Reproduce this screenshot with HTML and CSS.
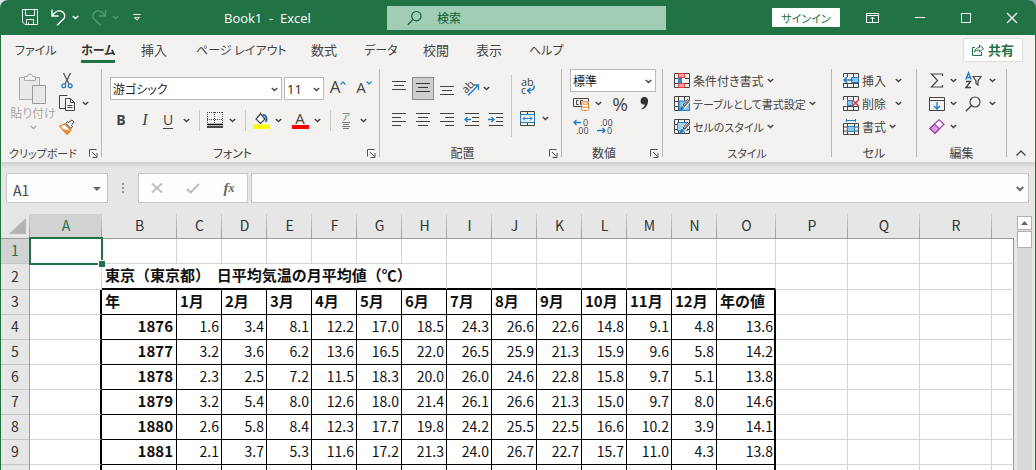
FILE: index.html
```html
<!DOCTYPE html>
<html lang="ja">
<head>
<meta charset="utf-8">
<title>Book1 - Excel</title>
<link rel="stylesheet" href="styles.css">
</head>
<body>
<svg class="defs" aria-hidden="true">
  <symbol id="chev" viewBox="0 0 7 5"><path d="M.8 1l2.700 2.600L6.200 1" fill="none" stroke="currentColor" stroke-width="1.400"/></symbol>
  <symbol id="launch" viewBox="0 0 9 9"><path d="M.5 7.500V.5H7.500M3 3l4.500 4.500M8 4v4.500H3.500" fill="none" stroke="#555"/></symbol>
  <symbol id="lens" viewBox="0 0 16 16"><circle cx="10" cy="6" r="5" fill="none" stroke="currentColor" stroke-width="1.200"/><path d="M6.300 9.700L.8 15.200" stroke="currentColor" stroke-width="1.300"/></symbol>
  <symbol id="gridbase" viewBox="0 0 16 16"><path d="M.5.5h15v14H.5zM.5 5.500h15M.5 10.500h15M4.500.5v14M10.500.5v14" fill="none" stroke="#444"/></symbol>
</svg>
<div class="app">
  <header class="titlebar">
    <div class="quick">
      <button class="ib" aria-label="保存"><svg width="17" height="17" viewBox="0 0 17 17" fill="none" stroke="#fff"><path d="M.5.5h15v15H3l-2.500-2.500zM3.500.5v6h9v-6M4.500 15.500v-5h7v5M6.500 15.500v-2"/></svg></button>
      <button class="ib undo" aria-label="元に戻す"><svg width="16" height="17" viewBox="0 0 16 17" fill="none" stroke="#fff" stroke-width="1.400"><path d="M1 .5v6.500h6.500M1.300 6.700C4 3 6.500 1.500 9.500 2c4 .7 5.500 5 3 8L6 16.300"/></svg></button>
      <button class="ib light" aria-label="元に戻すの一覧"><svg width="7" height="5"><use href="#chev"/></svg></button>
      <button class="ib redo" aria-label="やり直し"><svg width="16" height="17" viewBox="0 0 16 17" fill="none" stroke="#4f9a6e" stroke-width="1.400"><path d="M14.500.5v6.500H8M14.200 6.700C11.500 3 9 1.500 6 2c-4 .7-5.500 5-3 8l6.500 6.300"/></svg></button>
      <button class="ib dim" aria-label="やり直しの一覧"><svg width="7" height="5"><use href="#chev"/></svg></button>
      <button class="ib custom" aria-label="クイック アクセスのカスタマイズ"><svg width="8" height="7" viewBox="0 0 8 7" fill="none" stroke="#fff"><path d="M.5.5h7M1.500 3.500L4 6l2.500-2.500z"/></svg></button>
      <span class="doc">Book1 &nbsp;- &nbsp;Excel</span>
    </div>
    <label class="search"><svg width="15" height="16"><use href="#lens"/></svg><input type="search" placeholder="検索" aria-label="検索"></label>
    <div class="window">
      <button class="signin">サインイン</button>
      <button class="ib" aria-label="リボンの表示オプション"><svg width="13" height="10" viewBox="0 0 13 10" fill="none" stroke="#fff"><path d="M.5.5h12v9H.5zM.5 2.500h12M6.500 9V4M4.500 6l2-2 2 2"/></svg></button>
      <button class="ib" aria-label="最小化"><svg width="10" height="10" viewBox="0 0 10 10" stroke="#fff"><path d="M0 4.500h10"/></svg></button>
      <button class="ib" aria-label="最大化"><svg width="10" height="10" viewBox="0 0 10 10" fill="none" stroke="#fff"><path d="M.5.5h9v9h-9z"/></svg></button>
      <button class="ib" aria-label="閉じる"><svg width="10" height="10" viewBox="0 0 10 10" stroke="#fff" stroke-width="1.200"><path d="M0 0l10 10M10 0L0 10"/></svg></button>
    </div>
  </header>

  <div class="frame">
  <nav class="tabs">
    <a href="#" class="kana">ファイル</a><a href="#" class="kana on">ホーム</a><a href="#">挿入</a><a href="#" class="kana">ページ レイアウト</a><a href="#">数式</a><a href="#" class="kana">データ</a><a href="#">校閲</a><a href="#">表示</a><a href="#" class="kana">ヘルプ</a>
    <button class="share"><svg width="12" height="12" viewBox="0 0 12 12" fill="none" stroke="#217346"><path d="M3 3.500H.5v8h9V8M2.500 8C3 5 5 3.500 7.500 3.500V1l4 3.500-4 3.500V6C5.500 6 4 6.500 2.500 8z"/></svg>共有</button>
  </nav>

  <section class="ribbon">
    <div class="group g-clip">
      <div class="body clip">
        <button class="paste" disabled><svg width="28" height="31" viewBox="0 0 28 31" fill="#e8e8e8" stroke="#aaa"><path d="M.5 4.500h20v22H.5z"/><path d="M5.500 7.500v-4h3a2.500 2.500 0 0 1 5 0h3v4z" fill="#f3f2f1"/><path d="M13.500 12.500h13v18h-13z" stroke="#999"/></svg><span>貼り付け</span><svg width="7" height="5"><use href="#chev"/></svg></button>
        <div class="stack">
          <div class="line"><button class="ib" aria-label="切り取り"><svg width="16" height="17" viewBox="0 0 16 17" fill="none"><path d="M4.500 1l5.500 11M11.500 1L6 12" stroke="#555" stroke-width="1.300"/><circle cx="4.800" cy="13.700" r="1.900" stroke="#1e7fc4" stroke-width="1.300"/><circle cx="11.200" cy="13.700" r="1.900" stroke="#1e7fc4" stroke-width="1.300"/></svg></button></div>
          <div class="line"><button class="ib" aria-label="コピー"><svg width="16" height="17" viewBox="0 0 16 17" fill="none" stroke="#444"><path d="M6.500 13.500h-6V.5h8M6.500 3.500h5l4 4v8h-9zM11.500 3.500v4h4M8.500 10.500h5M8.500 12.500h5"/></svg></button><button class="ib" aria-label="コピーの一覧"><svg width="7" height="5"><use href="#chev"/></svg></button></div>
          <div class="line"><button class="ib" aria-label="書式のコピー"><svg width="16" height="16" viewBox="0 0 16 16"><path d="M.8 7l5-2 6 6-3.500 4.300C5.500 13 3 10.500.8 7z" fill="#fff" stroke="#e07b1a" stroke-width="1.300"/><path d="M3 10l3 2 2 3 2.500-3.500-4-1z" fill="#e98a30"/><path d="M7 4.500l5 5 1.500-2-1-1 2.500-3.500L13 1 9.500 3.500l-1-1z" fill="#eee" stroke="#444"/></svg></button></div>
        </div>
      </div>
      <div class="cap kana">クリップボード<button class="launch" aria-label="クリップボードの設定"><svg width="9" height="9"><use href="#launch"/></svg></button></div>
    </div>

    <div class="group g-font">
      <div class="body two">
        <div class="fontrow">
          <div class="combo"><select aria-label="フォント"><option>游ゴシック</option></select><svg width="7" height="5"><use href="#chev"/></svg></div>
          <div class="combo size"><select aria-label="フォント サイズ"><option>11</option></select><svg width="7" height="5"><use href="#chev"/></svg></div>
          <button class="ib glyph big" aria-label="フォント サイズの拡大">A<svg width="6" height="4" viewBox="0 0 6 4" fill="none" stroke="#1e7fc4" stroke-width="1.200"><path d="M.5 3.500L3 1l2.500 2.500"/></svg></button>
          <button class="ib glyph" aria-label="フォント サイズの縮小">A<svg width="6" height="4" viewBox="0 0 6 4" fill="none" stroke="#1e7fc4" stroke-width="1.200"><path d="M.5.5L3 3 5.500.5"/></svg></button>
        </div>
        <div class="styrow">
          <button class="ib letter b">B</button><button class="ib letter i">I</button><button class="ib letter u">U</button>
          <button class="ib" aria-label="下線の一覧"><svg width="7" height="5"><use href="#chev"/></svg></button><i class="sep"></i>
          <button class="ib" aria-label="罫線"><svg width="16" height="16" viewBox="0 0 16 16" stroke="#444"><path d="M0 .5h16M0 7.500h16M.5 0v11M7.500 0v11M15.500 0v11" stroke-dasharray="1 1"/><path d="M0 12.500h16M0 15h16" stroke="#111" stroke-width="1.500"/></svg></button>
          <button class="ib" aria-label="罫線の一覧"><svg width="7" height="5"><use href="#chev"/></svg></button><i class="sep"></i>
          <button class="ib" aria-label="塗りつぶしの色"><svg width="17" height="17" viewBox="0 0 17 17"><path d="M0 12.500h17V17H0z" fill="#ff0"/><path d="M7.500 2L3 7l4.500 4.500L12 7 7.500 2V.5" fill="#fff" stroke="#444" stroke-width="1.200"/><path d="M9.500 3c3-.5 5 2 3.500 7" fill="none" stroke="#1e6fb4" stroke-width="2"/></svg></button>
          <button class="ib" aria-label="塗りつぶしの色の一覧"><svg width="7" height="5"><use href="#chev"/></svg></button>
          <button class="ib fcolor" aria-label="フォントの色">A</button>
          <button class="ib" aria-label="フォントの色の一覧"><svg width="7" height="5"><use href="#chev"/></svg></button><i class="sep"></i>
          <button class="ib ruby" aria-label="ふりがな"><span>ア</span><svg width="8" height="7" viewBox="0 0 8 7" stroke="#777"><path d="M0 .5h8M1 2.500h6M0 4.500h8M1 6.500h6"/></svg></button>
          <button class="ib" aria-label="ふりがなの一覧"><svg width="7" height="5"><use href="#chev"/></svg></button>
        </div>
      </div>
      <div class="cap">フォント<button class="launch" aria-label="フォントの設定"><svg width="9" height="9"><use href="#launch"/></svg></button></div>
    </div>

    <div class="group g-align">
      <div class="body alignbody">
        <div class="aligngrid">
          <button class="ib" aria-label="上揃え"><svg width="14" height="14" viewBox="0 0 14 14" stroke="#444"><path d="M0 .5h14M2 4.500h10M0 8.500h14"/></svg></button>
          <button class="ib pressed" aria-label="上下中央揃え"><svg width="14" height="14" viewBox="0 0 14 14" stroke="#333"><path d="M0 2.500h14M2 6.500h10M0 10.500h14"/></svg></button>
          <button class="ib" aria-label="下揃え"><svg width="14" height="14" viewBox="0 0 14 14" stroke="#444"><path d="M0 5.500h14M2 9.500h10M0 13.500h14"/></svg></button>
          <button class="ib" aria-label="方向"><svg width="17" height="16" viewBox="0 0 17 16"><text x="0" y="11" font-size="11" fill="#444" transform="rotate(-45 5 9)" class="ico">ab</text><path d="M5 15.500L15.500 5M10.500 5h5v5" fill="none" stroke="#1e7fc4" stroke-width="1.300"/></svg></button>
          <button class="ib start" aria-label="方向の一覧"><svg width="7" height="5"><use href="#chev"/></svg></button>
          <button class="ib" aria-label="左揃え"><svg width="14" height="13" viewBox="0 0 14 13" stroke="#444"><path d="M0 .5h14M0 4.500h9M0 8.500h14M0 12.500h9"/></svg></button>
          <button class="ib" aria-label="中央揃え"><svg width="14" height="13" viewBox="0 0 14 13" stroke="#444"><path d="M0 .5h14M2 4.500h10M0 8.500h14M2 12.500h10"/></svg></button>
          <button class="ib" aria-label="右揃え"><svg width="14" height="13" viewBox="0 0 14 13" stroke="#444"><path d="M0 .5h14M5 4.500h9M0 8.500h14M5 12.500h9"/></svg></button>
          <button class="ib" aria-label="インデントを減らす"><svg width="15" height="13" viewBox="0 0 15 13" fill="none" stroke="#444"><path d="M1 .5h14M8 4.500h7M8 8.500h7M1 12.500h14"/><path d="M7 6.500H1M3.500 4L1 6.500 3.500 9" stroke="#1e7fc4" stroke-width="1.300"/></svg></button>
          <button class="ib" aria-label="インデントを増やす"><svg width="15" height="13" viewBox="0 0 15 13" fill="none" stroke="#444"><path d="M1 .5h14M8 4.500h7M8 8.500h7M1 12.500h14"/><path d="M0 6.500h6M3.500 4L6 6.500 3.500 9" stroke="#1e7fc4" stroke-width="1.300"/></svg></button>
        </div>
        <div class="wrapcol">
          <button class="ib" aria-label="折り返して全体を表示する"><svg width="16" height="17" viewBox="0 0 16 17"><text x="1" y="8" font-size="11" fill="#444" class="ico">ab</text><text x="1" y="16" font-size="11" fill="#444" class="ico">c</text><path d="M14 7.500c1 3-1 5.500-6 5M10.500 10L7.500 12.500l3 3" fill="none" stroke="#1e7fc4" stroke-width="1.500"/></svg></button>
          <div class="line"><button class="ib" aria-label="セルを結合して中央揃え"><svg width="15" height="15" viewBox="0 0 15 15" fill="none" stroke="#444"><path d="M.5.5h14v14H.5zM7.500.5v3M7.500 11.500v3"/><path d="M.5 3.500h14v8H.5zM3 7.500h9M5 5.500l-2 2 2 2M10 5.500l2 2-2 2" stroke="#1e7fc4" fill="none"/></svg></button><button class="ib" aria-label="結合の一覧"><svg width="7" height="5"><use href="#chev"/></svg></button></div>
        </div>
      </div>
      <div class="cap">配置<button class="launch" aria-label="配置の設定"><svg width="9" height="9"><use href="#launch"/></svg></button></div>
    </div>

    <div class="group g-num">
      <div class="body numbody">
        <div class="combo"><select aria-label="表示形式"><option>標準</option></select><svg width="7" height="5"><use href="#chev"/></svg></div>
        <div class="numrow">
          <button class="ib" aria-label="通貨表示形式"><svg width="17" height="14" viewBox="0 0 17 14" fill="none" stroke="#444"><path d="M8 9.500H.5v-8h15v3M5.500 3.500h-2v4h2M10 3.500H7.500v4"/><path d="M8.500 6v6c0 2 7 2 7 0V6z" fill="#fff" stroke="#e07b1a"/><ellipse cx="12" cy="6" rx="3.500" ry="1.300" fill="#fff" stroke="#e07b1a"/><path d="M8.500 9c0 1.700 7 1.700 7 0" stroke="#e07b1a"/></svg></button>
          <button class="ib" aria-label="通貨の一覧"><svg width="7" height="5"><use href="#chev"/></svg></button>
          <button class="ib pct">%</button>
          <button class="ib" aria-label="桁区切りスタイル"><svg width="9" height="13" viewBox="0 0 9 13"><path d="M4 0c3 0 4.500 2 4 5-.5 4-3 6.500-6 7.500L1.500 11.500c2-1 3.200-2.300 3.300-4C2 8 .5 6.200.5 4S2 0 4 0z" fill="#333"/></svg></button>
        </div>
        <div class="line dec">
          <button class="ib" aria-label="小数点以下の表示桁数を増やす"><svg width="16" height="15" viewBox="0 0 16 15"><text x="10" y="7" font-size="9" fill="#444" class="ico">0</text><text x="3" y="15" font-size="9" fill="#444" class="ico">.00</text><path d="M8 3.500H1M3.500 1L1 3.500 3.500 6" fill="none" stroke="#1e7fc4" stroke-width="1.300"/></svg></button>
          <button class="ib" aria-label="小数点以下の表示桁数を減らす"><svg width="16" height="15" viewBox="0 0 16 15"><text x="3" y="7" font-size="9" fill="#444" class="ico">.00</text><text x="10" y="15" font-size="9" fill="#444" class="ico">0</text><path d="M0 11.500h8M5.500 9L8 11.500 5.500 14" fill="none" stroke="#1e7fc4" stroke-width="1.300"/></svg></button>
        </div>
      </div>
      <div class="cap">数値<button class="launch" aria-label="数値の設定"><svg width="9" height="9"><use href="#launch"/></svg></button></div>
    </div>

    <div class="group g-style">
      <div class="body list">
        <button class="cmd"><svg width="16" height="15" viewBox="0 0 16 15"><use href="#gridbase" width="16" height="16"/><path d="M4.500.5h6v4h-6zM4.500 10.500h6v4h-6z" fill="#f7a6a6" stroke="#e03a3a"/><path d="M4 5h4v5H4z" fill="#2e86c9"/><path d="M8 5h3v5H8z" fill="#f3f2f1"/></svg>条件付き書式<svg class="c" width="7" height="5"><use href="#chev"/></svg></button>
        <button class="cmd kana"><svg width="16" height="15" viewBox="0 0 16 15"><use href="#gridbase" width="16" height="16"/><path d="M5 5h10.500v9.500H5z" fill="#8fc5ec" stroke="#1e7fc4"/><path d="M15 4.500l-6 7" stroke="#fff" stroke-width="4"/><path d="M15.500 3.500l-6 7M14 3l-5 6 1.500 1.500 5-5.500" fill="#fff" stroke="#444"/><path d="M8.500 10c-2 0-2 3-4 4 3 .7 5.500-.5 5.500-2.500z" fill="#1e7fc4"/></svg>テーブルとして書式設定<svg class="c" width="7" height="5"><use href="#chev"/></svg></button>
        <button class="cmd kana"><svg width="16" height="15" viewBox="0 0 16 15"><use href="#gridbase" width="16" height="16"/><path d="M3.500 3.500h10v8h-10z" fill="#a8d2f0" stroke="#1e7fc4"/><path d="M15 4.500l-6 7" stroke="#fff" stroke-width="4"/><path d="M15.500 3.500l-6 7M14 3l-5 6 1.500 1.500 5-5.500" fill="#fff" stroke="#444"/><path d="M8.500 10c-2 0-2 3-4 4 3 .7 5.500-.5 5.500-2.500z" fill="#1e7fc4"/></svg>セルのスタイル<svg class="c" width="7" height="5"><use href="#chev"/></svg></button>
      </div>
      <div class="cap kana">スタイル</div>
    </div>

    <div class="group g-cell">
      <div class="body list">
        <button class="cmd wide"><svg width="16" height="15" viewBox="0 0 16 15"><use href="#gridbase" width="16" height="16"/><path d="M0 4h9v6H0z" fill="#f3f2f1"/><path d="M8.500 4.500h7v5h-7z" fill="#8fc5ec" stroke="#1e7fc4"/><path d="M10 7H1M4 4L1 7l3 3" fill="none" stroke="#1e7fc4" stroke-width="1.500"/></svg>挿入<svg class="c" width="7" height="5"><use href="#chev"/></svg></button>
        <button class="cmd wide"><svg width="16" height="15" viewBox="0 0 16 15"><use href="#gridbase" width="16" height="16"/><path d="M0 4h16v6H0z" fill="#f3f2f1"/><path d="M4.500 4.500h5v5h-5z" fill="#8fc5ec" stroke="#1e7fc4"/><path d="M9.500 4l6 6M15.500 4l-6 6" stroke="#e03a3a" stroke-width="1.600"/></svg>削除<svg class="c" width="7" height="5"><use href="#chev"/></svg></button>
        <button class="cmd"><svg width="16" height="16" viewBox="0 0 16 16" fill="none"><path d="M.5 4.500h15v11H.5zM.5 8h15M.5 12h15M4.500 4v12M11.500 4v12" stroke="#444"/><path d="M4.500 7.500h7v5h-7z" fill="#8fc5ec" stroke="#1e7fc4"/><path d="M3.500 0v3M12.500 0v3M3.500 1.500h9" stroke="#1e7fc4"/></svg>書式<svg class="c" width="7" height="5"><use href="#chev"/></svg></button>
      </div>
      <div class="cap">セル</div>
    </div>

    <div class="group g-edit">
      <div class="body editgrid">
        <button class="ib" aria-label="オート SUM"><svg width="14" height="15" viewBox="0 0 14 15" fill="none" stroke="#444" stroke-width="1.200"><path d="M12.500 3V1H1.500l6 6.500-6 6.500h11v-2"/></svg></button><button class="ib" aria-label="SUM の一覧"><svg width="7" height="5"><use href="#chev"/></svg></button>
        <button class="ib" aria-label="並べ替えとフィルター"><svg width="17" height="17" viewBox="0 0 17 17"><path d="M.8 7.500L3.500.8l2.700 6.700M1.800 5.500h3.500" fill="none" stroke="#1e7fc4" stroke-width="1.400"/><path d="M1 9.500h4.500L1 15.500h5" fill="none" stroke="#444" stroke-width="1.400"/><path d="M8 4.500h8L13 9v4l-2-1.500V9z" fill="none" stroke="#444" stroke-width="1.200"/></svg></button><button class="ib" aria-label="並べ替えの一覧"><svg width="7" height="5"><use href="#chev"/></svg></button>
        <button class="ib" aria-label="フィル"><svg width="16" height="14" viewBox="0 0 16 14" fill="none" stroke="#444"><path d="M.5.5h15v13H.5zM.5 3.500h15"/><path d="M8 5v7M5 9l3 3 3-3" stroke="#1e7fc4" stroke-width="1.300"/></svg></button><button class="ib" aria-label="フィルの一覧"><svg width="7" height="5"><use href="#chev"/></svg></button>
        <button class="ib" aria-label="検索と選択"><svg width="16" height="16"><use href="#lens"/></svg></button><button class="ib" aria-label="検索の一覧"><svg width="7" height="5"><use href="#chev"/></svg></button>
        <button class="ib" aria-label="クリア"><svg width="16" height="15" viewBox="0 0 16 15" stroke="#a03fae" stroke-width="1.200"><path d="M1 9.500L10 .8l5 4.400-9 9z" fill="#fff"/><path d="M1 9.500l4.500-4.300 5 4.600L6 14.200z" fill="#d9a0df"/></svg></button><button class="ib" aria-label="クリアの一覧"><svg width="7" height="5"><use href="#chev"/></svg></button>
      </div>
      <div class="cap">編集</div>
    </div>
    <button class="ib collapse" aria-label="リボンを折りたたむ"><svg width="10" height="6" viewBox="0 0 10 6" fill="none" stroke="#444" stroke-width="1.300"><path d="M.5 5.500L5 1l4.500 4.500"/></svg></button>
  </section>

  <section class="formula">
    <div class="namebox"><input type="text" value="A1" aria-label="名前ボックス"><svg width="8" height="4" viewBox="0 0 8 4"><path d="M0 0h8L4 4z" fill="#666"/></svg></div>
    <svg class="dots" width="2" height="10" viewBox="0 0 2 10" fill="#999"><path d="M0 0h2v2H0zM0 4h2v2H0zM0 8h2v2H0z"/></svg>
    <div class="fx">
      <button class="ib" aria-label="キャンセル"><svg width="12" height="10" viewBox="0 0 12 10" stroke="#c0c0c0" stroke-width="2"><path d="M1 .5l10 9M11 .5l-10 9"/></svg></button>
      <button class="ib" aria-label="入力"><svg width="14" height="11" viewBox="0 0 14 11" fill="none" stroke="#c0c0c0" stroke-width="2.200"><path d="M1 6l3.500 3.500L13 1"/></svg></button>
      <button class="ib fn" aria-label="関数の挿入">f<span>x</span></button>
    </div>
    <div class="entry"><input type="text" aria-label="数式バー"><svg width="8" height="6" viewBox="0 0 8 6" fill="none" stroke="#666" stroke-width="2"><path d="M.8 1L4 4.200 7.200 1"/></svg></div>
  </section>

  <section class="sheet">
    <div class="cells">
    <table>
      <colgroup><col class="rh"><col class="w72"><col class="w75"><col class="w45" span="12"><col class="w59"><col class="w72" span="3"><col></colgroup>
      <thead><tr><th class="corner"><svg width="17" height="16" viewBox="0 0 17 16"><path d="M17 0v16H0z" fill="#b4b4b4"/></svg></th><th class="sel">A</th><th>B</th><th>C</th><th>D</th><th>E</th><th>F</th><th>G</th><th>H</th><th>I</th><th>J</th><th>K</th><th>L</th><th>M</th><th>N</th><th>O</th><th>P</th><th>Q</th><th>R</th><th></th></tr></thead>
      <tbody>
      <tr><th class="sel">1</th><td class="active"></td><td></td><td></td><td></td><td></td><td></td><td></td><td></td><td></td><td></td><td></td><td></td><td></td><td></td><td></td><td></td><td></td><td></td><td></td></tr>
      <tr class="title"><th>2</th><td></td><td colspan="7">東京（東京都）&nbsp; 日平均気温の月平均値（℃）</td><td></td><td></td><td></td><td></td><td></td><td></td><td></td><td></td><td></td><td></td><td></td></tr>
      <tr class="data head"><th>3</th><td></td><td>年</td><td>1月</td><td>2月</td><td>3月</td><td>4月</td><td>5月</td><td>6月</td><td>7月</td><td>8月</td><td>9月</td><td>10月</td><td>11月</td><td>12月</td><td>年の値</td><td></td><td></td><td></td><td></td></tr>
      <tr class="data"><th>4</th><td></td><td>1876</td><td>1.6</td><td>3.4</td><td>8.1</td><td>12.2</td><td>17.0</td><td>18.5</td><td>24.3</td><td>26.6</td><td>22.6</td><td>14.8</td><td>9.1</td><td>4.8</td><td>13.6</td><td></td><td></td><td></td><td></td></tr>
      <tr class="data"><th>5</th><td></td><td>1877</td><td>3.2</td><td>3.6</td><td>6.2</td><td>13.6</td><td>16.5</td><td>22.0</td><td>26.5</td><td>25.9</td><td>21.3</td><td>15.9</td><td>9.6</td><td>5.8</td><td>14.2</td><td></td><td></td><td></td><td></td></tr>
      <tr class="data"><th>6</th><td></td><td>1878</td><td>2.3</td><td>2.5</td><td>7.2</td><td>11.5</td><td>18.3</td><td>20.0</td><td>26.0</td><td>24.6</td><td>22.8</td><td>15.8</td><td>9.7</td><td>5.1</td><td>13.8</td><td></td><td></td><td></td><td></td></tr>
      <tr class="data"><th>7</th><td></td><td>1879</td><td>3.2</td><td>5.4</td><td>8.0</td><td>12.6</td><td>18.0</td><td>21.4</td><td>26.1</td><td>26.6</td><td>21.3</td><td>15.0</td><td>9.7</td><td>8.0</td><td>14.6</td><td></td><td></td><td></td><td></td></tr>
      <tr class="data"><th>8</th><td></td><td>1880</td><td>2.6</td><td>5.8</td><td>8.4</td><td>12.3</td><td>17.7</td><td>19.8</td><td>24.2</td><td>25.5</td><td>22.5</td><td>16.6</td><td>10.2</td><td>3.9</td><td>14.1</td><td></td><td></td><td></td><td></td></tr>
      <tr class="data"><th>9</th><td></td><td>1881</td><td>2.1</td><td>3.7</td><td>5.3</td><td>11.6</td><td>17.2</td><td>21.3</td><td>24.0</td><td>26.7</td><td>22.7</td><td>15.7</td><td>11.0</td><td>4.3</td><td>13.8</td><td></td><td></td><td></td><td></td></tr>
      <tr class="data"><th></th><td></td><td></td><td></td><td></td><td></td><td></td><td></td><td></td><td></td><td></td><td></td><td></td><td></td><td></td><td></td><td></td><td></td><td></td><td></td></tr>
      </tbody>
    </table>
    </div>
    <div class="scroll"><button class="up" aria-label="上へスクロール"><svg width="7" height="4" viewBox="0 0 7 4"><path d="M3.500 0L7 4H0z" fill="#666"/></svg></button><div class="thumb"></div></div>
  </section>
  </div>
</div>
</body>
</html>
```
FILE: styles.css
```css
* { box-sizing: border-box; }
body {
  margin: 0;
  background: linear-gradient(90deg, #dfe8e3 50%, #7f9fc0 50%);
  font: 12px/16px "Noto Sans CJK JP", sans-serif;
  color: #444;
}
button, input, select { font: inherit; color: inherit; margin: 0; padding: 0; }
svg { display: block; flex: none; overflow: visible; }
.defs { position: absolute; width: 0; height: 0; }
.app { height: 100vh; display: flex; flex-direction: column; overflow: hidden; border-radius: 8px 8px 0 0; background: #e6e6e6; }
.frame { flex: 1; min-height: 0; display: flex; flex-direction: column; border: solid #217346; border-width: 0 1px; }
.ib { border: 0; background: none; display: flex; align-items: center; justify-content: center; min-width: 0; }
.ico { font-family: "Open Sans", sans-serif; }

.titlebar { flex: none; height: 35px; display: grid; grid-template-columns: 387px minmax(0, 1fr) 370px; align-items: center; background: #217346; color: #fff; }
.quick { display: flex; align-items: center; padding-left: 22px; }
.undo { margin-left: 12px; }
.light { color: #fff; margin-left: 5px; }
.redo { margin-left: 12px; }
.dim { color: #4f9a6e; margin-left: 5px; }
.custom { margin-left: 14px; }
.doc { margin-left: 83px; font-family: "Open Sans", sans-serif; font-size: 13px; white-space: nowrap; }
.search { height: 24px; display: flex; align-items: center; gap: 15px; padding-left: 20px; background: #a0cdb4; color: #0e5c2f; }
.search input { flex: 1; min-width: 0; border: 0; background: none; outline: 0; }
.search input::placeholder { color: #0e5c2f; opacity: 1; }
.window { display: flex; align-items: center; justify-content: flex-end; gap: 36px; padding-right: 19px; }
.signin { width: 68px; height: 19px; margin-right: -10px; border: 0; border-radius: 1px; background: #fff; color: #217346; font-size: 11px; font-feature-settings: "palt"; }

.tabs { height: 29px; flex: none; display: grid; grid-template-columns: 66px 60px 55px 115px 53px 59px 53px 53px 60px 1fr; padding: 3px 12px 0 14px; background: #f3f2f1; font-feature-settings: "palt"; font-size: 13px; line-height: 24px; }
.tabs a { justify-self: start; height: 25px; color: #444; text-decoration: none; white-space: nowrap; }
.tabs .kana { font-size: 12px; }
.tabs .on { border-bottom: 3px solid #217346; color: #333; font-weight: bold; line-height: 24px; }
.share { justify-self: end; width: 60px; height: 24px; display: flex; align-items: center; justify-content: center; gap: 4px; border: 1px solid #ddd; border-radius: 2px; background: #fff; color: #217346; font-weight: bold; }

.ribbon { flex: none; display: flex; padding: 5px 0; background: #f3f2f1; font-feature-settings: "palt"; }
.group { flex: none; height: 88px; display: flex; flex-direction: column; border-right: 1px solid #b8b8b8; }
.g-clip { width: 101px; }
.g-font { width: 278px; }
.g-align { width: 182px; }
.g-num { width: 101px; }
.g-style { width: 169px; }
.g-cell { width: 85px; }
.g-edit { width: 90px; }
.body { flex: 1; min-height: 0; }
.cap { position: relative; height: 14px; text-align: center; line-height: 20px; padding-right: 16px; }
.cap.kana, .cmd.kana { font-size: 11px; }
.g-style .cap, .g-cell .cap, .g-edit .cap { padding-right: 0; }
.launch { position: absolute; right: 3px; top: 6px; border: 0; background: none; }
.line { display: flex; align-items: center; height: 23px; }
.sep { width: 1px; height: 21px; background: #c8c8c8; }

.clip { display: flex; padding-left: 9px; }
.paste { width: 46px; border: 0; background: none; color: #aaa; display: flex; flex-direction: column; align-items: center; padding-top: 4px; white-space: nowrap; align-self: flex-start; }
.paste span { margin: 1px 0 4px; }
.stack { padding-left: 3px; }
.stack .line { gap: 7px; }

.combo { position: relative; height: 23px; border: 1px solid #bbb; background: #fff; }
.combo select { appearance: none; border: 0; width: 100%; height: 100%; padding: 0 2px; background: none; color: #222; outline: 0; }
.combo svg { position: absolute; right: 3px; top: 9px; pointer-events: none; }
.two { padding: 8px 0 0 8px; }
.fontrow { display: grid; grid-template-columns: 172px 40px 24px 24px; column-gap: 2px; }
.size select { font-family: "Open Sans", sans-serif; font-size: 13px; }
.glyph { font: 15px/20px "Open Sans", sans-serif; align-items: flex-start; }
.glyph.big { font-size: 17px; }
.glyph svg { margin-top: 4px; }
.styrow { display: grid; grid-template-columns: 22px 26px 20px 16px 10px 22px 12px 14px 18px 16px 28px 7px 18px 14px 20px; align-items: center; justify-items: center; height: 24px; margin-top: 8px; }
.letter { font: 14px/18px "Open Sans", sans-serif; }
.b { font-weight: bold; }
.i { font-style: italic; font-family: "Liberation Serif", serif; font-size: 16px; }
.u { text-decoration: underline; text-underline-offset: 3px; }
.fcolor { width: 17px; height: 17px; font: 15px/14px "Open Sans", sans-serif; border-bottom: 4px solid red; }
.ruby { flex-direction: column; font-size: 9px; line-height: 10px; color: #777; }

.alignbody { display: flex; padding: 6px 0 0 7px; }
.aligngrid { display: grid; grid-template-columns: repeat(5, 24px); grid-template-rows: 26px 36px; align-items: center; justify-items: center; width: 125px; height: 62px; border-right: 1px solid #c8c8c8; }
.aligngrid .start { justify-self: start; }
.pressed { width: 22px; height: 23px; border: 1px solid #8c8c8c; background: #cfcecd; }
.wrapcol { padding: 3px 0 0 8px; display: flex; flex-direction: column; gap: 12px; align-items: flex-start; }
.wrapcol .line { gap: 7px; }

.numbody { padding: 0 6px 0 8px; }
.numrow { display: grid; grid-template-columns: 22px 12px 32px 16px; align-items: center; justify-items: center; height: 23px; }
.pct { font: 19px/20px "Open Sans", sans-serif; }
.dec { gap: 8px; padding-left: 3px; }

.list { padding-left: 11px; }
.cmd { height: 23px; display: flex; align-items: center; gap: 3px; border: 0; background: none; white-space: nowrap; }
.wide .c { margin-left: 6px; }
.editgrid { display: grid; grid-template-columns: 22px 10px 30px 8px; grid-auto-rows: 23px; padding-left: 9px; align-items: center; justify-items: center; }
.collapse { margin: auto 9px 0 auto; height: 8px; }

.formula { flex: none; display: flex; align-items: center; height: 51px; padding: 11px 6px 10px 5px; background: linear-gradient(#cecece, #e6e6e6 6px); }
.namebox, .fx, .entry { position: relative; height: 30px; border: 1px solid #c6c6c6; background: #fdfdfd; }
.namebox { width: 102px; }
.namebox input { width: 80px; height: 100%; padding: 4px 0 0 6px; border: 0; background: none; font-size: 14px; outline: 0; }
.namebox svg { position: absolute; right: 6px; top: 13px; }
.dots { margin: 0 14px; }
.fx { width: 110px; display: grid; grid-template-columns: repeat(3, 36px); align-items: center; justify-items: center; margin-right: 3px; }
.fn { font: italic bold 15px/18px "Liberation Serif", serif; color: #666; }
.fn span { font-size: 12px; }
.entry { flex: 1; }
.entry input { width: 97%; height: 100%; border: 0; background: none; outline: 0; }
.entry svg { position: absolute; right: 4px; top: 12px; }

.sheet { flex: 1; min-height: 0; display: flex; padding-top: 1px; }
.cells { flex: 1; min-width: 0; overflow: hidden; }
table { width: 100%; table-layout: fixed; border-collapse: separate; border-spacing: 0; font-size: 14px; line-height: 20px; color: #111; }
.rh { width: 29px; }
.w72 { width: 72px; }
.w75 { width: 75px; }
.w45 { width: 45px; }
.w59 { width: 59px; }
th, td { height: 25px; padding: 0 2px 2px; white-space: nowrap; overflow: hidden; }
th { font-weight: 400; color: #333; padding: 0 0 2px; }
thead th { border-bottom: 1px solid #9b9b9b; background: linear-gradient(#d0d0d0, #9b9b9b) right / 1px 100% no-repeat #e6e6e6; }
thead th:last-child { background: #e6e6e6; }
.corner svg { margin: 2px 0 0 8px; }
tbody th { border-right: 1px solid #9b9b9b; border-bottom: 1px solid #c4c4c4; background: #e6e6e6; }
th.sel { background-color: #d2d2d2; color: #217346; }
td { border: solid #d4d4d4; border-width: 0 1px 1px 0; background: #fff; text-align: right; }
td:last-child { border-right-color: #9b9b9b; }
.active { position: relative; overflow: visible; }
.active::before { content: ""; position: absolute; inset: -2px -2px -2px -1px; border: 2px solid #217346; }
.active::after { content: ""; position: absolute; right: -4px; bottom: -4px; width: 6px; height: 6px; background: #217346; border: solid #fff; border-width: 1px 0 0 1px; }
.title td, .title th { height: 26px; }
.title td:nth-child(3) { text-align: left; font-size: 15px; font-weight: bold; padding-left: 3px; }
.title td:nth-child(n+3):nth-child(-n+10) { border-bottom: 2px solid #000; }
.data td:nth-child(2) { border-right: 2px solid #000; }
.data td:nth-child(n+3):nth-child(-n+16) { border-right-color: #000; border-bottom-color: #000; }
.data td:nth-child(16) { border-right-width: 2px; padding-right: 1px; }
.data td:nth-child(3) { font-size: 15px; font-weight: bold; padding-right: 3px; }
.head td:nth-child(n) { font-size: 15px; font-weight: bold; text-align: left; padding: 0 0 2px 3px; }
.scroll { width: 21px; padding: 2px 3px 0; background: linear-gradient(#dadada, #dadada) center 2px / 15px 100% no-repeat; }
.up { display: flex; align-items: center; justify-content: center; width: 15px; height: 14px; border: 1px solid #b0b0b0; background: #fff; }
.thumb { height: 17px; border: 1px solid #b0b0b0; background: #fff; margin-top: 1px; }
```
